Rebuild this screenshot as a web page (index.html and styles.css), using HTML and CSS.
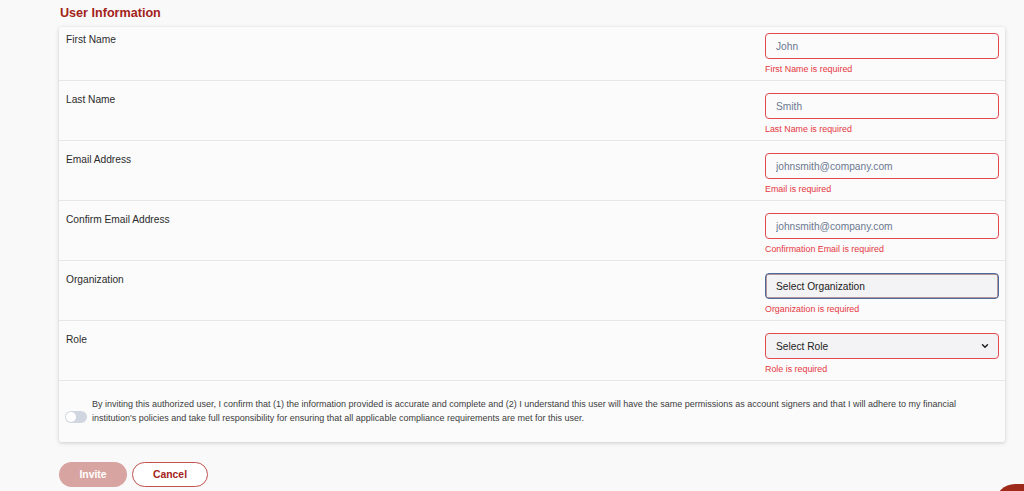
FILE: index.html
```html
<html>
    <head>
        <title>Invite Authorized User</title>
        <link rel="stylesheet" href="styles.css">
    </head>
    <body>
        <div id = 'page'>
            <h2 class = 'section-title'>User Information</h2>
            <div class = 'card'>
                <div class = 'row first'>
                    <label class = 'row-label'>First Name</label>
                    <div class = 'field'>
                        <input class = 'inp-text error' type = 'text' placeholder = 'John'>
                        <p class = 'error-msg'>First Name is required</p>
                    </div>
                </div>
                <div class = 'row'>
                    <label class = 'row-label'>Last Name</label>
                    <div class = 'field'>
                        <input class = 'inp-text error' type = 'text' placeholder = 'Smith'>
                        <p class = 'error-msg'>Last Name is required</p>
                    </div>
                </div>
                <div class = 'row'>
                    <label class = 'row-label'>Email Address</label>
                    <div class = 'field'>
                        <input class = 'inp-text error' type = 'text' placeholder = 'johnsmith@company.com'>
                        <p class = 'error-msg'>Email is required</p>
                    </div>
                </div>
                <div class = 'row'>
                    <label class = 'row-label'>Confirm Email Address</label>
                    <div class = 'field'>
                        <input class = 'inp-text error' type = 'text' placeholder = 'johnsmith@company.com'>
                        <p class = 'error-msg'>Confirmation Email is required</p>
                    </div>
                </div>
                <div class = 'row'>
                    <label class = 'row-label'>Organization</label>
                    <div class = 'field'>
                        <div class = 'select focused'>Select Organization</div>
                        <p class = 'error-msg'>Organization is required</p>
                    </div>
                </div>
                <div class = 'row'>
                    <label class = 'row-label'>Role</label>
                    <div class = 'field'>
                        <div class = 'select error'>
                            <span>Select Role</span>
                            <svg class = 'chevron' width = '10' height = '10' viewBox = '0 0 10 10'>
                                <path d = 'M2.5 3.8 L5 6.3 L7.5 3.8' fill = 'none' stroke = '#222' stroke-width = '1.5' stroke-linecap = 'round' stroke-linejoin = 'round'/>
                            </svg>
                        </div>
                        <p class = 'error-msg'>Role is required</p>
                    </div>
                </div>
                <div class = 'row confirm'>
                    <span class = 'toggle'><span class = 'knob'></span></span>
                    <p class = 'confirm-text'>By inviting this authorized user, I confirm that (1) the information provided is accurate and complete and (2) I understand this user will have the same permissions as account signers and that I will adhere to my financial institution's policies and take full responsibility for ensuring that all applicable compliance requirements are met for this user.</p>
                </div>
            </div>
            <div class = 'actions'>
                <button class = 'btn btn-primary'>Invite</button>
                <button class = 'btn btn-outline'>Cancel</button>
            </div>
        </div>
        <div class = 'help-fab'></div>
    </body>
</html>
```

FILE: styles.css
```css
body {
    margin : 0px;
    background : #f9f9f9;
    font-family : "Liberation Sans", Arial, sans-serif;
    overflow : hidden;
}
#page {
    padding : 5px 19px 0px 59px;
}
.section-title {
    margin : 0px 0px 6px 1px;
    font-size : 12.6px;
    line-height : 16px;
    font-weight : bold;
    color : #a3231a;
}
.card {
    background : #fbfbfb;
    border-radius : 3px;
    box-shadow : 0px 1px 4px rgba(0, 0, 0, 0.18);
}
.row {
    display : flex;
    justify-content : space-between;
    padding : 12px 6px 6px 7px;
    border-top : 1px solid #e6e6e6;
    height : 41px;
}
.row.first {
    border-top : none;
    padding-top : 6px;
}
.row-label {
    font-size : 10.2px;
    line-height : 14px;
    color : #2b2b2b;
}
.field {
    width : 234px;
}
.inp-text, .select {
    box-sizing : border-box;
    width : 234px;
    height : 26px;
    border : 1.5px solid #e5484d;
    border-radius : 4px;
    background : #fbfbfb;
    padding : 0px 10px;
    font-size : 10.2px;
    font-family : "Liberation Sans", Arial, sans-serif;
    color : #222;
    display : block;
}
.inp-text::placeholder {
    color : #6b7890;
}
.inp-text:focus {
    outline : none;
}
.select {
    display : flex;
    align-items : center;
    justify-content : space-between;
    background : #f3f3f5;
}
.select.focused {
    border-color : #4a6a9a;
    box-shadow : inset 0px 0px 0px 0.5px #7a3a40;
}
.chevron {
    margin-right : -2px;
}
.error-msg {
    margin : 5px 0px 0px 0px;
    font-size : 8.9px;
    line-height : 11px;
    color : #e5373f;
}
.confirm {
    height : auto;
    align-items : center;
    justify-content : flex-start;
    padding : 17px 6px 17px 6px;
}
.toggle {
    flex : none;
    width : 22px;
    height : 12px;
    border-radius : 6px;
    background : #cfd6e0;
    margin-right : 5px;
    margin-top : 11px;
    position : relative;
}
.knob {
    position : absolute;
    left : 1px;
    top : 1px;
    width : 10px;
    height : 10px;
    border-radius : 50%;
    background : #fff;
}
.confirm-text {
    margin : 0px;
    font-size : 9px;
    line-height : 13.5px;
    color : #3c3c3c;
    max-width : 880px;
}
.actions {
    display : flex;
    gap : 5px;
    margin-top : 20px;
}
.btn {
    box-sizing : border-box;
    height : 25px;
    border-radius : 13px;
    font-size : 10.4px;
    font-weight : bold;
    font-family : "Liberation Sans", Arial, sans-serif;
    cursor : pointer;
}
.btn-primary {
    width : 68px;
    border : none;
    background : #d8a4a2;
    color : #fff;
}
.btn-outline {
    width : 76px;
    border : 1px solid #c2524d;
    background : #fff;
    color : #a3231a;
}
.help-fab {
    position : fixed;
    left : 995px;
    top : 484px;
    width : 60px;
    height : 40px;
    border-radius : 20px;
    background : #9e2a1c;
}
```
